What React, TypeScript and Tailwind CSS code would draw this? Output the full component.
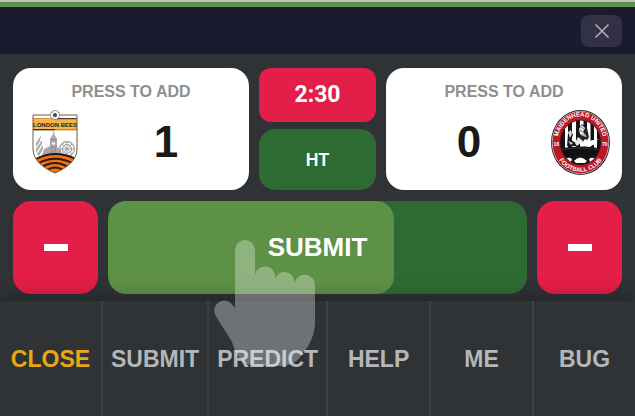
import { ReactNode } from 'react';

const navItems = ['CLOSE', 'SUBMIT', 'PREDICT', 'HELP', 'ME', 'BUG'];

function LondonBeesBadge() {
  return (
    <svg viewBox="0 0 46 64" className="h-16 w-[46px]" role="img" aria-label="London Bees crest">
      <defs>
        <clipPath id="bees-shield">
          <path d="M1 5H45V39C45 50 35 58 23 63C11 58 1 50 1 39Z" />
        </clipPath>
      </defs>
      <g clipPath="url(#bees-shield)">
        <rect width="46" height="64" fill="#fff" />
        <rect y="8" width="23" height="1.6" fill="#e58a2e" />
        <rect x="23" y="8" width="23" height="1.6" fill="#4a4036" />
        <rect y="9.6" width="46" height="9.4" fill="#f6b548" />
        <rect y="19" width="23" height="1.4" fill="#3d332b" />
        <rect x="23" y="19" width="23" height="1.4" fill="#e07b1f" />
        {/* skyline */}
        <g fill="#a9a9ad">
          <path d="M4 33L8 27V31L4 37ZM4 39L10 30V34L4 43ZM5 44L11 35V39L7 46ZM7 29L9 26V28Z" />
          <path d="M21.6 20.5L22.6 25L25 29V46H18V29L20.6 25Z" />
          <path d="M9 48L12 39L18 36V47ZM25 37L29 40V47H25Z" />
        </g>
        <path d="M18 29.5H25M18 37H25M20 38V46M23 38V46" stroke="#77777b" strokeWidth="0.6" />
        <circle cx="21.5" cy="33.5" r="2.2" fill="#eee" stroke="#828286" strokeWidth="0.6" />
        <g fill="none" stroke="#99999d" strokeWidth="1.1">
          <circle cx="35" cy="39" r="7.4" />
          <circle cx="35" cy="39" r="4.5" />
          <path d="M28 39H42M35 32V46M30 34L40 44M40 34L30 44" strokeWidth="0.9" />
        </g>
        <path d="M0 50Q23 37 46 50V64H0Z" fill="#ef7214" />
        <g fill="none" stroke="#2b1a10" strokeWidth="1.9">
          <path d="M4 49Q23 39 44 49" />
          <path d="M6 53.5Q23 44 41 53.5" />
          <path d="M10 57Q23 49 36 57" />
          <path d="M15 60Q23 55 31 60" />
        </g>
      </g>
      <path d="M1 5H45V39C45 50 35 58 23 63C11 58 1 50 1 39Z" fill="none" stroke="#80543a" strokeWidth="1" />
      <circle cx="23" cy="5" r="4.6" fill="#fff" stroke="#77777a" strokeWidth="0.8" />
      <path d="M23 3L25 4.5L24.2 6.8H21.8L21 4.5ZM19.3 2.5L21 2M26 1.7L27 3M20 8L21 9M25 9L26 8" fill="#444" stroke="#444" strokeWidth="0.6" />
      <text x="23" y="16.6" textAnchor="middle" fontSize="6" fontWeight="700" fill="#2a2118" fontFamily="'Liberation Sans', sans-serif">
        LONDON BEES
      </text>
    </svg>
  );
}

function MaidenheadBadge() {
  return (
    <svg viewBox="0 0 59 65" className="h-[65px] w-[59px]" role="img" aria-label="Maidenhead United crest">
      <defs>
        <path id="maiden-top" d="M6.5 32.5A23 26 0 0 1 52.5 32.5" />
        <path id="maiden-bottom" d="M2.8 32.5A26.7 29.3 0 0 0 56.2 32.5" />
        <clipPath id="maiden-inner">
          <ellipse cx="29.5" cy="32.5" rx="20" ry="22" />
        </clipPath>
      </defs>
      <ellipse cx="29.5" cy="32.5" rx="29.5" ry="32.5" fill="#18191b" />
      <ellipse cx="29.5" cy="32.5" rx="28.3" ry="31.2" fill="#bb1824" stroke="#e9dcdc" strokeWidth="0.7" />
      <ellipse cx="29.5" cy="32.5" rx="20.4" ry="22.4" fill="#141516" />
      <g clipPath="url(#maiden-inner)">
        <path d="M14 10H17V38H14ZM21 9H25V38H21ZM29 9H32.5V38H29ZM36 9H39.5V38H36ZM43 12H46V38H43Z" fill="#fff" />
        <path d="M17 24L20 20L22 25L20 30L25 33L28 36H16Z" fill="#17181a" />
        <path d="M17 22L20 20L21 24L19 28ZM17 31L22 33L20 35Z" fill="#d9d9d9" />
        <path d="M27 20L31 14L36 18L38 27L35 32L29 31Z" fill="#232426" />
        <path d="M28 19L31 15L34 18L32 22L36 27L32 26L29 24ZM27 27L32 31L26 36L24 33Z" fill="#e8e8e8" />
        <path d="M30 17L33 19M29 20L32 22M31 24L34 26" stroke="#444" strokeWidth="0.6" />
        <path d="M29 36L34 29L38 31L47 29L44 34L38 37Z" fill="#fff" />
        <path d="M7 39Q29 34 52 39V48Q29 42 7 48Z" fill="#101112" />
        <path d="M8 40Q29 36 50 40" fill="none" stroke="#44464a" strokeWidth="0.6" />
        <path d="M14 50Q17 46 21 49L20 52H14ZM23 51Q29 44 36 51L34 53H25ZM38 49Q42 46 45 50V52H39Z" fill="#fff" />
      </g>
      <g fill="#fff" fontWeight="700" fontFamily="'Liberation Sans', sans-serif" textAnchor="middle">
        <text fontSize="6">
          <textPath href="#maiden-top" startOffset="50%">MAIDENHEAD UNITED</textPath>
        </text>
        <text fontSize="6">
          <textPath href="#maiden-bottom" startOffset="50%">FOOTBALL CLUB</textPath>
        </text>
        <text x="5.2" y="35.5" fontSize="5">18</text>
        <text x="53.8" y="35.5" fontSize="5">70</text>
      </g>
    </svg>
  );
}

function ScoreCard({ score, badge, away = false }: { score: number; badge: ReactNode; away?: boolean }) {
  return (
    <button type="button" className="flex h-[122px] flex-col rounded-[18px] bg-white px-[7px] pt-3 font-bold">
      <span className="w-full text-center text-base leading-6 text-[#8e8e8e]">PRESS TO ADD</span>
      <span className={`flex h-[76px] w-full items-center ${away ? 'flex-row-reverse' : ''}`}>
        <span className="flex w-[70px] justify-center">{badge}</span>
        <span className="flex-1 text-center text-[44px] leading-none text-[#1a1a1a]">{score}</span>
      </span>
    </button>
  );
}

function MinusButton({ label }: { label: string }) {
  return (
    <button type="button" aria-label={label} className="flex w-[85px] shrink-0 items-center justify-center rounded-[18px] bg-[#e31e48]">
      <span className="h-[7px] w-6 bg-white" />
    </button>
  );
}

function HandPointer() {
  return (
    <svg
      viewBox="0 0 101 126"
      className="pointer-events-none absolute top-[39px] left-1/2 z-20 -ml-[104px] h-[126px] w-[101px]"
      aria-hidden="true"
    >
      <path
        d="M21 68V10A10 10 0 0 1 41 10V35A10 10 0 0 1 61 38V39A10 10 0 0 1 80.5 42V44A10.2 10.2 0 0 1 101 46V82C101 94 96 105 89 113C84 121 78 126 67 126H43C32 126 24 119 20 108L18 102L1.8 76A10 10 0 0 1 18.5 65Z"
        fill="#fff"
        fillOpacity="0.31"
      />
    </svg>
  );
}

export default function App() {
  return (
    <div className="flex min-h-screen flex-col overflow-hidden bg-[#2f3336] font-['Liberation_Sans',Arial,sans-serif]">
      <div className="h-[7px] border-t-2 border-[#bfbfc3] bg-[#5d9146]" />
      <header className="flex h-[47px] items-center justify-end bg-[#1a1b2e] px-[13px]">
        <button type="button" aria-label="Close" className="flex h-8 w-[41px] items-center justify-center rounded-lg bg-[#323145]">
          <svg viewBox="0 0 14 14" className="size-[14px]" fill="none" stroke="#b4b4b6" strokeWidth="1.5">
            <path d="M0.5 0.5L13.5 13.5M13.5 0.5L0.5 13.5" />
          </svg>
        </button>
      </header>

      <main className="px-[13px] pt-[14px] pb-[7px]">
        <section className="grid grid-cols-[1fr_117px_1fr] gap-[10px]">
          <ScoreCard score={1} badge={<LondonBeesBadge />} />
          <div className="flex flex-col gap-[7px] font-[Roboto,sans-serif] text-white">
            <div className="flex h-[54px] items-center justify-center rounded-xl bg-[#e31e48] text-[23px] font-bold">2:30</div>
            <button type="button" className="flex-1 rounded-2xl bg-[#2e6b32] text-lg font-semibold">HT</button>
          </div>
          <ScoreCard score={0} badge={<MaidenheadBadge />} away />
        </section>

        <section className="relative mt-[11px] flex h-[93px] gap-[10px]">
          <MinusButton label="Remove home goal" />
          <button type="button" className="relative flex-1 overflow-hidden rounded-[18px] bg-[#2e6b32] text-[26px] font-bold text-white">
            <span className="absolute inset-y-0 left-0 w-[68.3%] rounded-[18px] bg-[#5d9146]" />
            <span className="relative">SUBMIT</span>
          </button>
          <MinusButton label="Remove away goal" />
          <HandPointer />
        </section>
      </main>

      <nav className="relative z-10 flex flex-1 divide-x-2 divide-[#3e4144] bg-[#2f3336] shadow-[0_0_20px_rgba(0,0,0,0.4)]">
        {navItems.map((item) => (
          <button
            key={item}
            type="button"
            className={`flex-1 px-2 pt-[2px] text-[23px] font-bold ${item === 'CLOSE' ? 'text-[#e8a812]' : 'text-[#b5b6b7]'}`}
          >
            {item}
          </button>
        ))}
      </nav>
    </div>
  );
}
